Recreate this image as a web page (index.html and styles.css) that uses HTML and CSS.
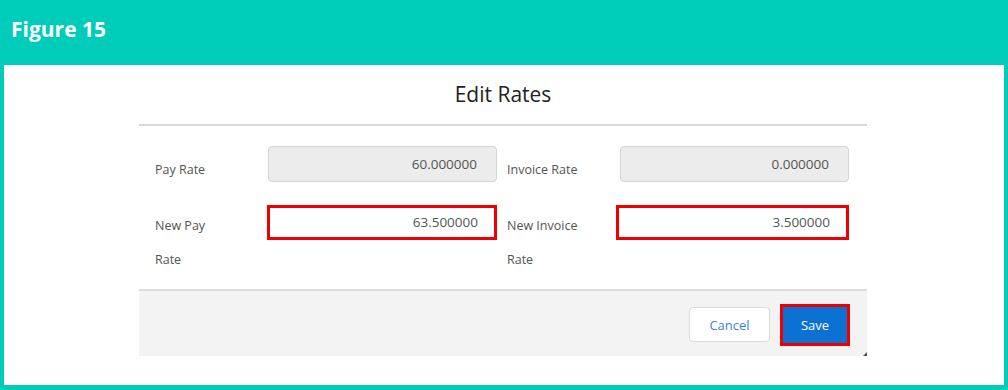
FILE: index.html
```html
<!DOCTYPE html>
<html lang="en">
<head>
    <meta charset="UTF-8">
    <title>Figure 15 - Edit Rates</title>
    <link rel="stylesheet" href="styles.css">
</head>
<body>
    <div class="figure-head">
        <h1>Figure 15</h1>
    </div>
    <div class="figure-body">
        <div class="modal">
            <div class="modal-header">
                <h2>Edit Rates</h2>
            </div>
            <div class="modal-content">
                <div class="field-label first">Pay Rate</div>
                <div class="field-input readonly">60.000000</div>
                <div class="field-label first">Invoice Rate</div>
                <div class="field-input readonly">0.000000</div>

                <div class="field-label">New Pay<br>Rate</div>
                <div class="field-input highlight">63.500000</div>
                <div class="field-label">New Invoice<br>Rate</div>
                <div class="field-input highlight wide">3.500000</div>
            </div>
            <div class="modal-footer">
                <button class="btn btn-neutral">Cancel</button>
                <button class="btn btn-brand">Save</button>
            </div>
        </div>
    </div>
</body>
</html>
```

FILE: styles.css
```css
body {
    margin: 0;
    background-color: #00cdb9;
    font-family: 'Open Sans', 'Liberation Sans', sans-serif;
    width: 1008px;
    height: 390px;
    overflow: hidden;
}

.figure-head {
    height: 65px;
    box-sizing: border-box;
    padding: 15px 0 0 11px;
}

.figure-head h1 {
    margin: 0;
    color: #ffffff;
    font-family: 'Open Sans', 'Liberation Sans', sans-serif;
    font-weight: 700;
    font-size: 21px;
}

.figure-body {
    background-color: #ffffff;
    margin: 0 4px;
    height: 320px;
    padding-left: 135px;
    box-sizing: border-box;
}

.modal {
    width: 728px;
    height: 291px;
    position: relative;
}

/* small resize marker in the corner of the screenshot */
.modal::after {
    content: '';
    position: absolute;
    right: 0;
    bottom: 0;
    border-style: solid;
    border-width: 0 0 4px 4px;
    border-color: transparent transparent #555 transparent;
}

.modal-header {
    height: 61px;
    border-bottom: 2px solid #d8d8d8;
    text-align: center;
    box-sizing: border-box;
    padding-top: 15px;
}

.modal-header h2 {
    margin: 0;
    font-weight: 400;
    font-size: 21px;
    color: #222;
}

.modal-content {
    display: grid;
    grid-template-columns: 103px 229px 103px 229px;
    column-gap: 10px;
    row-gap: 22px;
    padding: 20px 0 12px 16px;
    height: 163px;
    box-sizing: border-box;
}

.field-label {
    font-size: 12.5px;
    color: #545454;
    line-height: 34px;
    padding-top: 4px;
}

.field-label.first {
    padding-top: 12px;
    line-height: 24px;
}

.field-input {
    height: 36px;
    box-sizing: border-box;
    border: 1px solid #d4d4d4;
    border-radius: 4px;
    text-align: right;
    padding-right: 19px;
    font-size: 13.5px;
    line-height: 34px;
    color: #555;
}

.field-input.readonly {
    background-color: #ececec;
}

.field-input.highlight {
    border: 3px solid #ee0000;
    border-radius: 0;
    height: 35px;
    line-height: 29px;
    padding-right: 16px;
    margin-left: -1px;
}

.field-input.wide {
    margin-left: -4px;
}

.modal-footer {
    height: 67px;
    background-color: #f3f3f3;
    border-top: 2px solid #dcdcdc;
    box-sizing: border-box;
    display: flex;
    justify-content: flex-end;
    align-items: center;
    gap: 10px;
    padding-right: 17px;
    padding-top: 2px;
}

.btn {
    font-family: 'Open Sans', 'Liberation Sans', sans-serif;
    font-size: 13px;
    cursor: pointer;
}

.btn-neutral {
    width: 81px;
    height: 35px;
    background-color: #ffffff;
    border: 1px solid #dddbda;
    border-radius: 4px;
    color: #3b82d6;
}

.btn-brand {
    width: 70px;
    height: 42px;
    background-color: #0b72d4;
    border: 3px solid #ee0000;
    color: #ffffff;
}
```
